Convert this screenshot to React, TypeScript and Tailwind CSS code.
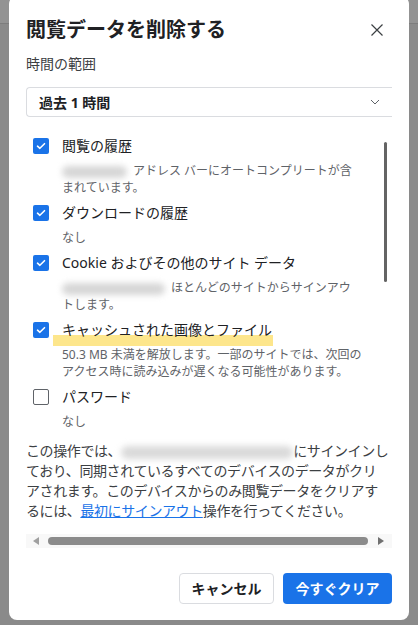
import React from 'react'

const ITEMS = [
  { label: '閲覧の履歴', checked: true, blur: 65, desc: ['アドレス バーにオートコンプリートが含', 'まれています。'] },
  { label: 'ダウンロードの履歴', checked: true, blur: 0, desc: ['なし'] },
  { label: 'Cookie およびその他のサイト データ', checked: true, blur: 103, desc: ['ほとんどのサイトからサインアウ', 'トします。'] },
  { label: 'キャッシュされた画像とファイル', checked: true, blur: 0, mark: true, desc: ['50.3 MB 未満を解放します。一部のサイトでは、次回の', 'アクセス時に読み込みが遅くなる可能性があります。'] },
  { label: 'パスワード', checked: false, blur: 0, desc: ['なし'] },
]

function Check({ on }: { on: boolean }) {
  if (!on) return <div className="w-4 h-4 rounded-[2px] border-[1.5px] border-[#5f6368] bg-white shrink-0" />
  return (
    <div className="w-4 h-4 rounded-[2px] bg-[#1a73e8] flex items-center justify-center shrink-0">
      <svg width="10" height="8" viewBox="0 0 10 8" fill="none">
        <path d="M1.5 4.2 L3.9 6.3 L8.5 1.7" stroke="#fff" strokeWidth="1.6" strokeLinecap="round" strokeLinejoin="round" />
      </svg>
    </div>
  )
}

export default function App() {
  return (
    <div
      className="relative w-[418px] h-[625px] overflow-hidden bg-[#8a8a8a]"
      style={{ fontFamily: "'Noto Sans', 'Noto Sans CJK JP', sans-serif" }}
    >
      {/* page behind the overlay */}
      <div className="h-[24px] bg-[#939393] border-b border-[#7d7d7d]" />

      {/* dialog */}
      <div className="absolute left-[9px] top-[-4px] w-[400px] h-[624px] rounded-[8px] bg-white px-[17px] pt-[20px] overflow-hidden">
        <div className="h-[28px] flex items-center justify-between">
          <h1 className="text-[20px] leading-[28px] font-bold text-[#202124]">閲覧データを削除する</h1>
          <svg width="14" height="14" viewBox="0 0 14 14" className="mr-[8px]">
            <path d="M1.5 1.5 L12.5 12.5 M12.5 1.5 L1.5 12.5" stroke="#3c4043" strokeWidth="1.2" />
          </svg>
        </div>

        <div className="mt-[10px] text-[14px] leading-5 text-[#3c4043]">時間の範囲</div>

        <div className="mt-[13px] h-[30px] border border-r-0 border-[#dadce0] rounded-l-[4px] flex items-center justify-between pl-[12px] pr-[12px]">
          <span className="text-[14px] font-bold text-[#202124]">過去 1 時間</span>
          <svg width="10" height="6" viewBox="0 0 10 6" fill="none">
            <path d="M1 1 L5 5 L9 1" stroke="#5f6368" strokeWidth="1" />
          </svg>
        </div>

        {/* scrollable list */}
        <div className="relative mt-[8px] h-[303px] overflow-hidden pt-[11px] pl-[7px]">
          {ITEMS.map(it => (
            <div key={it.label} className="relative mb-[7px]">
              {it.mark && <div className="absolute left-[20px] top-[15px] w-[220px] h-[11px] bg-[#fde68c]" />}
              <div className="relative flex items-center gap-[13px] h-5">
                <Check on={it.checked} />
                <span className="text-[14px] leading-5 text-[#202124] whitespace-nowrap">{it.label}</span>
              </div>
              <div className="relative mt-[6px] pl-[29px] text-[12px] leading-[17px] text-[#5f6368] whitespace-nowrap">
                {it.desc.map((line, i) => (
                  <div key={i}>
                    {i === 0 && it.blur > 0 && (
                      <span
                        className="inline-block align-middle h-[12px] mr-[6px] rounded-full bg-[#d6d6d6] blur-[3px]"
                        style={{ width: it.blur }}
                      />
                    )}
                    {line}
                  </div>
                ))}
              </div>
            </div>
          ))}
          <div className="absolute right-[5px] top-[17px] w-[3px] h-[140px] rounded-full bg-[#646464]" />
        </div>

        <p className="mt-[13px] text-[14px] leading-5 text-[#3c4043] tracking-[-0.4px] whitespace-nowrap">
          この操作では、
          <span className="inline-block align-middle w-[172px] h-[13px] rounded-full bg-[#dadada] blur-[3px]" />
          にサインインし
          <br />
          ており、同期されているすべてのデバイスのデータがクリ
          <br />
          アされます。このデバイスからのみ閲覧データをクリアす
          <br />
          るには、<span className="text-[#1a73e8] underline">最初にサインアウト</span>操作を行ってください。
        </p>

        {/* horizontal scrollbar */}
        <div className="mt-[13px] h-[14px] bg-[#f8f8f8] flex items-center">
          <svg width="6" height="8" viewBox="0 0 6 8" className="ml-[7px]">
            <path d="M6 0 L0 4 L6 8 Z" fill="#a0a0a0" />
          </svg>
          <div className="ml-[9px] w-[320px] h-[8px] rounded-full bg-[#8b8b8b]" />
          <svg width="6" height="8" viewBox="0 0 6 8" className="ml-[10px]">
            <path d="M0 0 L6 4 L0 8 Z" fill="#707070" />
          </svg>
        </div>

        <div className="mt-[25px] flex justify-end gap-[9px]">
          <button className="w-[95px] h-[31px] rounded-[4px] border border-[#dadce0] bg-white text-[14px] font-bold text-[#202124]">
            キャンセル
          </button>
          <button className="w-[109px] h-[31px] rounded-[4px] bg-[#1a73e8] text-[14px] font-bold text-white">
            今すぐクリア
          </button>
        </div>
      </div>
    </div>
  )
}
